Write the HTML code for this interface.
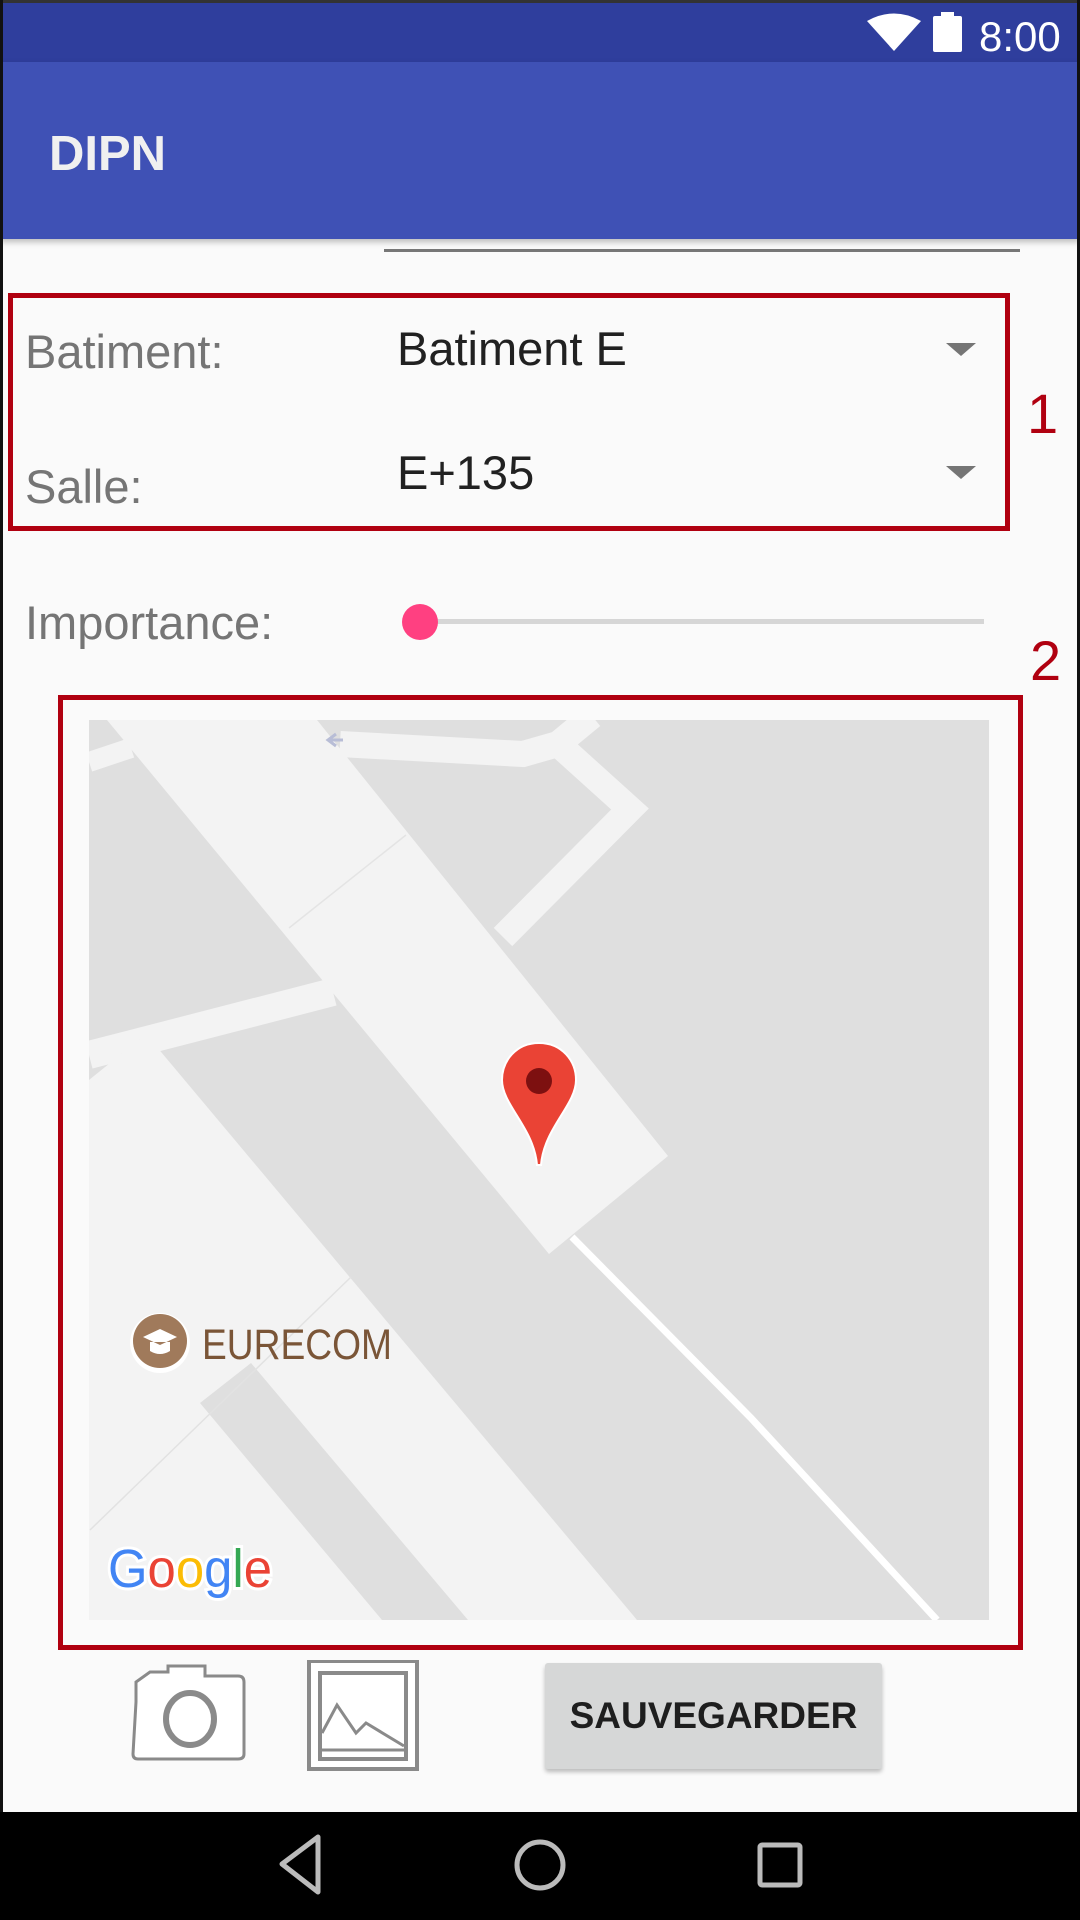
<!DOCTYPE html>
<html><head><meta charset="utf-8"><style>
*{margin:0;padding:0;box-sizing:border-box}
body{width:1080px;height:1920px;position:relative;background:#fafafa;font-family:"Liberation Sans",sans-serif;overflow:hidden}
.a{position:absolute}
.lbl{color:#757575;font-size:47px;line-height:1}
.val{color:#212121;font-size:47px;line-height:1}
.arr{width:0;height:0;border-left:15px solid transparent;border-right:15px solid transparent;border-top:13px solid #757575}
.red{border:5px solid #b00010}
.num{color:#b00010;font-size:56px;line-height:1}
</style></head><body>
<div class="a" style="left:0;top:0;width:1080px;height:62px;background:#2f3e9d"></div>
<div class="a" style="left:0;top:0;width:1080px;height:3px;background:#333"></div>
<svg class="a" style="left:860px;top:10px" width="110" height="48" viewBox="860 10 110 48">
<path d="M867 21 Q894 6 921 21 L894 51 Z" fill="#fff"/>
<rect x="933" y="16" width="29" height="36" rx="2" fill="#fff"/><rect x="941" y="12" width="13" height="5" fill="#fff"/>
</svg>
<div class="a" style="left:979px;top:16px;color:#fff;font-size:42px;line-height:1">8:00</div>
<div class="a" style="left:0;top:62px;width:1080px;height:177px;background:#3f51b5;box-shadow:0 3px 6px rgba(0,0,0,.25)"></div>
<div class="a" style="left:49px;top:130px;color:#f0f0f0;font-size:49px;font-weight:bold;line-height:1">DIPN</div>
<div class="a" style="left:0;top:0;width:3px;height:1920px;background:#111"></div>
<div class="a" style="right:0;top:0;width:3px;height:1920px;background:#111"></div>

<div class="a" style="left:384px;top:249px;width:636px;height:3px;background:#777"></div>

<div class="a red" style="left:8px;top:293px;width:1002px;height:238px"></div>
<div class="a lbl" style="left:25px;top:328px">Batiment:</div>
<div class="a val" style="left:397px;top:325px">Batiment E</div>
<div class="a arr" style="left:946px;top:343px"></div>
<div class="a lbl" style="left:25px;top:463px">Salle:</div>
<div class="a val" style="left:397px;top:449px">E+135</div>
<div class="a arr" style="left:946px;top:466px"></div>
<div class="a num" style="left:1027px;top:386px">1</div>

<div class="a lbl" style="left:25px;top:599px">Importance:</div>
<div class="a" style="left:420px;top:619px;width:564px;height:5px;background:#d6d6d6"></div>
<div class="a" style="left:402px;top:604px;width:36px;height:36px;border-radius:50%;background:#ff4081"></div>
<div class="a num" style="left:1030px;top:633px">2</div>

<div class="a red" style="left:58px;top:695px;width:965px;height:955px"></div>
<svg class="a" style="left:89px;top:720px" width="900" height="900" viewBox="89 720 900 900">
<rect x="89" y="720" width="900" height="900" fill="#dfdfdf"/>
<polyline points="89,762 131,748" stroke="#f3f3f3" stroke-width="20" fill="none"/>
<polygon points="107,720 317,720 668,1156 549,1254" fill="#f3f3f3"/>
<line x1="289" y1="928" x2="406" y2="835" stroke="#e4e4e4" stroke-width="1.5"/>
<polyline points="340,744 523,754 558,744 630,809 503,937" stroke="#f3f3f3" stroke-width="26" fill="none" stroke-linejoin="miter"/>
<line x1="558" y1="744" x2="592" y2="716" stroke="#f3f3f3" stroke-width="26"/>
<path d="M336 734 l-8 6 8 6 M329 740 h14" stroke="#b8bdd6" stroke-width="3" fill="none"/>
<line x1="89" y1="1055" x2="333" y2="992" stroke="#f3f3f3" stroke-width="28"/>
<polygon points="146,1034 637,1620 89,1620 89,1080" fill="#f3f3f3"/>
<polygon points="200,1403 251,1363 468,1620 382,1620" fill="#dfdfdf"/>
<line x1="90" y1="1530" x2="351" y2="1277" stroke="#e2e2e2" stroke-width="1.5"/>
<polyline points="572,1237 751,1418 937,1620" stroke="#fff" stroke-width="7" fill="none"/>
<path d="M539 1043 C516 1043 502 1061 502 1080 C502 1105 534 1128 537 1165 L541 1165 C544 1128 576 1105 576 1080 C576 1061 562 1043 539 1043Z" fill="#ea4335" stroke="#fff" stroke-width="2"/>
<ellipse cx="539" cy="1081" rx="13" ry="13" fill="#7d1010"/>
<circle cx="160" cy="1343" r="30" fill="#fff"/>
<circle cx="160" cy="1341" r="27" fill="#a07a5b"/>
<path d="M143 1337 L160 1329 L177 1337 L160 1345Z M150 1342 v9 q10 6 20 0 v-9" fill="#fff"/>
<text x="202" y="1359" font-family="Liberation Sans" font-size="43" fill="#7a5537" textLength="190" lengthAdjust="spacingAndGlyphs">EURECOM</text>
<g font-family="Liberation Sans" font-size="54" stroke="#fff" stroke-width="6" paint-order="stroke">
<text x="108" y="1587" textLength="164" lengthAdjust="spacingAndGlyphs"><tspan fill="#4285f4">G</tspan><tspan fill="#ea4335">o</tspan><tspan fill="#fbbc05">o</tspan><tspan fill="#4285f4">g</tspan><tspan fill="#34a853">l</tspan><tspan fill="#ea4335">e</tspan></text></g>
</svg>

<svg class="a" style="left:125px;top:1660px" width="300" height="120" viewBox="125 1660 300 120">
<path d="M136 1702 L136 1682 L150 1672 L168 1672 L168 1666 L205 1666 L205 1676 L238 1676 Q244 1676 244 1682 L244 1754 Q244 1759 238 1759 L138 1759 Q133 1759 133 1754 Z" fill="#fff" stroke="#8a8a8a" stroke-width="3"/>
<ellipse cx="190" cy="1719" rx="24" ry="26" fill="none" stroke="#8a8a8a" stroke-width="6"/>
<rect x="309" y="1661" width="108" height="108" fill="#fff" stroke="#8a8a8a" stroke-width="4"/>
<rect x="320" y="1673" width="86" height="86" fill="none" stroke="#8a8a8a" stroke-width="4"/>
<path d="M322 1733 L337 1705 L356 1733 L366 1723 L404 1746" fill="none" stroke="#8a8a8a" stroke-width="3"/>
<line x1="320" y1="1750" x2="406" y2="1750" stroke="#8a8a8a" stroke-width="3"/>
</svg>

<div class="a" style="left:545px;top:1663px;width:337px;height:106px;background:#d6d7d7;border-radius:3px;box-shadow:0 3px 4px rgba(0,0,0,.25);color:#1e1e1e;font-size:37px;font-weight:bold;text-align:center;line-height:106px">SAUVEGARDER</div>

<div class="a" style="left:0;top:1812px;width:1080px;height:108px;background:#000"></div>
<svg class="a" style="left:0;top:1812px" width="1080" height="108">
<path d="M318 25 L282 52 L318 80 Z" fill="none" stroke="#bbb" stroke-width="5" stroke-linejoin="round"/>
<circle cx="540" cy="53" r="23" fill="none" stroke="#bbb" stroke-width="5"/>
<rect x="760" y="33" width="40" height="40" rx="2" fill="none" stroke="#bbb" stroke-width="5"/>
</svg>
</body></html>
